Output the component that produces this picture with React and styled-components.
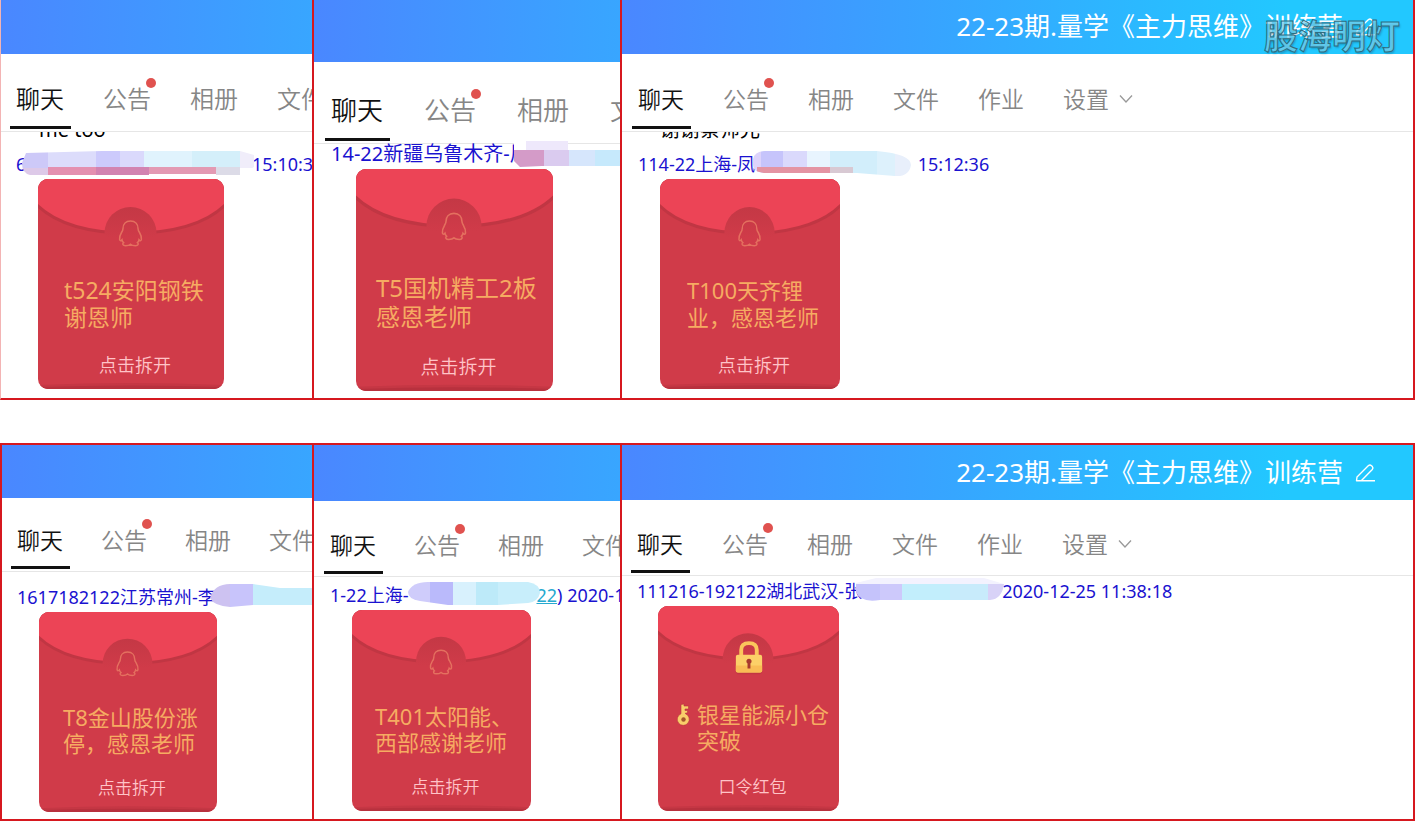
import React from 'react'
import styled, { createGlobalStyle } from 'styled-components'

const GlobalStyle = createGlobalStyle`
  * { box-sizing: border-box; }
  body {
    margin: 0;
    background: #fff;
    font-family: "Noto Sans", "Noto Sans CJK SC", sans-serif;
  }
`
const Board = styled.main`
  display: grid;
  grid-template-columns: 314fr 308fr 793fr;
  row-gap: 43px;
  padding-right: 1px;
`
const Panel = styled.section`
  min-width: 0;
  overflow: hidden;
  padding-bottom: 7px;
  border: 0 solid #d6181f;
  border-right-width: 2px;
  border-bottom-width: 2px;
  border-top-width: ${props => (props.$framed ? '2px' : '0')};
  border-left: ${props => props.$left || '0'};
`
const Header = styled.header`
  position: relative;
  display: flex;
  align-items: center;
  justify-content: flex-end;
  gap: 12px;
  height: ${props => props.$height}px;
  padding-right: 37px;
  color: #fff;
  background: ${props => props.$wide
    ? 'linear-gradient(92deg, #4a87ff 0%, #36a6ff 42%, #22c8ff 84%)'
    : 'linear-gradient(92deg, #4a87ff 0%, #38a6ff 100%)'};
`
const Title = styled.h1`
  margin: 0;
  padding-bottom: 2px;
  font-size: 26px;
  line-height: 36px;
  font-weight: 400;
  white-space: nowrap;
`
const IconButton = styled.button`
  display: flex;
  padding: 0;
  border: 0;
  color: inherit;
  background: none;
`
const Watermark = styled.span`
  position: absolute;
  top: 16px;
  right: 13px;
  z-index: 1;
  font-size: 34px;
  line-height: 40px;
  font-weight: 700;
  color: rgba(125, 212, 240, 0.7);
  -webkit-text-stroke: 1px #2f6c80;
  text-shadow: 1px 2px 2px rgba(0, 0, 0, 0.2);
`
const Tabs = styled.nav`
  display: flex;
  align-items: flex-end;
  gap: ${props => props.$gap}px;
  height: ${props => props.$height}px;
  padding: 0 0 2px ${props => props.$left}px;
  border-bottom: 1px solid #e6e6e6;
`
const Tab = styled.a`
  position: relative;
  flex: none;
  display: flex;
  align-items: center;
  gap: 10px;
  padding-bottom: ${props => props.$pad}px;
  font-size: ${props => props.$size}px;
  line-height: 34px;
  font-weight: 350;
  color: ${props => (props.$active ? '#111' : '#868686')};
  text-decoration: none;

  &::after {
    content: '';
    display: ${props => (props.$active ? 'block' : 'none')};
    position: absolute;
    left: -6px;
    right: -7px;
    bottom: 0;
    height: 3px;
    background: #111;
  }
`
const Dot = styled.i`
  position: absolute;
  top: -4px;
  right: -5px;
  width: 10px;
  height: 10px;
  border-radius: 50%;
  background: #e0524f;
`
const Chat = styled.div`
  padding-top: ${props => props.$top}px;
`
const Leftover = styled.div`
  display: flex;
  align-items: flex-end;
  height: 8px;
  margin-bottom: 15px;
  padding-left: 38px;
  overflow: hidden;
  font-size: 20px;
  line-height: 20px;
  color: #000;
`
const Sender = styled.div`
  display: flex;
  height: 18px;
  margin-bottom: 6px;
  padding-left: ${props => props.$left}px;
  font-size: ${props => props.$size}px;
  line-height: 18px;
  white-space: pre;
  color: #1a12d0;
`
const Mask = styled.span`
  position: relative;
  flex: none;
  width: ${props => props.$width}px;

  svg {
    position: absolute;
    top: -4px;
    left: ${props => -props.$overlap}px;
    overflow: visible;
  }
`
const Link = styled.a`
  color: #27a9cf;
`
const Card = styled.article`
  position: relative;
  display: flex;
  flex-direction: column;
  width: ${props => props.$width}px;
  height: ${props => props.$height}px;
  margin-left: ${props => props.$left}px;
  padding-bottom: 14px;
  border-radius: 10px;
  overflow: hidden;
  background: #d03b49;
`
const Backdrop = styled.svg`
  position: absolute;
  inset: 0;
  width: 100%;
  height: 100%;
`
const Wish = styled.p`
  position: relative;
  display: flex;
  margin: ${props => props.$top}px 0 0 ${props => props.$left}px;
  font-size: ${props => props.$size}px;
  line-height: ${props => props.$line}px;
  font-weight: 400;
  white-space: nowrap;
  color: #f6ab62;

  svg {
    margin: 2px 5px 0 0;
  }
`
const Open = styled.button`
  position: relative;
  margin: auto 0 0 8px;
  padding: 0;
  border: 0;
  background: none;
  font-family: inherit;
  font-size: ${props => props.$size}px;
  line-height: 20px;
  font-weight: 350;
  color: #ffc4c8;
`

const Pen = () => (
  <svg width="21" height="20" viewBox="0 0 21 20" fill="none" stroke="currentColor" strokeWidth="1.4" strokeLinejoin="round">
    <path d="M20 17.800H1.500L2 14L13.500 2.600Q15 1.400 16.500 2.700L17.300 3.500Q18.600 5 17.300 6.400L6.500 17.500" />
  </svg>
)

const Chevron = () => (
  <svg width="14" height="10" viewBox="0 0 14 10" fill="none" stroke="#999" strokeWidth="1.3">
    <path d="M1 1.5 L7 8 L13 1.5" />
  </svg>
)

const Key = () => (
  <svg width="15" height="23" viewBox="0 0 15 23">
    <path d="M4 1.500L7 1V3H11.500V6H8V7.500H10.500V10H8.500V10.800A6 6 0 1 1 4 10.800Z" fill="#f9ce6a" stroke="#b8343c" strokeWidth=".6" />
    <circle cx="6.5" cy="16.500" r="2.200" fill="#a5562b" />
  </svg>
)

const Penguin = () => (
  <path
    d="M92.500 42C87.500 42 85 45.500 85 49.500C85 51 84.500 52 83.500 53.500C82 56 81.300 58.500 81.600 60.500C81.800 62 83 62 84 60.800C84.200 62 84.800 62.800 85.600 63.600C84 64.800 84.800 66.700 87.500 66.700C89.800 66.700 91.500 66.200 92.500 65.200C93.500 66.200 95.200 66.700 97.500 66.700C100.200 66.700 101 64.800 99.400 63.600C100.200 62.800 100.800 62 101 60.800C102 62 103.200 62 103.400 60.500C103.700 58.500 103 56 101.500 53.500C100.500 52 100 51 100 49.500C100 45.500 97.500 42 92.500 42Z"
    fill="none"
    stroke="#e4705f"
    strokeWidth="1.5"
  />
)

const Lock = () => (
  <g>
    <path d="M80 52H107V66Q107 70 103 70H84Q80 70 80 66Z" fill="#b02f3b" opacity=".4" />
    <path d="M85.500 51V45Q85.500 38 93.500 38Q101.500 38 101.500 45V51" fill="none" stroke="#fbc65c" strokeWidth="4" />
    <rect x="80" y="50" width="27" height="18" rx="2" fill="#fcd068" />
    <path d="M80 61H107V66Q107 68 105 68H82Q80 68 80 66Z" fill="#f9bd55" />
    <path d="M93.500 54a2.600 2.600 0 0 1 1.500 4.800V64h-3v-5.200a2.600 2.600 0 0 1 1.500-4.800Z" fill="#a83a2e" />
  </g>
)

const Envelope = ({ id, locked }) => (
  <Backdrop viewBox="0 0 186 210" preserveAspectRatio="none">
    <defs>
      <linearGradient id={id} x1="0" y1="0" x2="0" y2="1">
        <stop offset="0" stopColor="#c43845" />
        <stop offset=".6" stopColor="#d03b49" />
      </linearGradient>
    </defs>
    <path d="M0 29Q28 55 92 56Q158 55 186 29V0H0Z" fill="#c03643" />
    <path d="M0 0H186V25Q158 52 93 53Q28 52 0 25Z" fill="#ec4456" />
    <circle cx="92.500" cy="54" r="26" fill={`url(#${id})`} />
    <path d="M0 206Q93 202 186 206V210H0Z" fill="#c53744" />
    <path d="M0 208Q93 205 186 208V210H0Z" fill="#b8313e" />
    {locked ? <Lock /> : <Penguin />}
  </Backdrop>
)

// mosaic patches: [x, y, width, height, colour]
const Mosaic = ({ id, width, height, shape, blocks }) => (
  <svg width={width} height={height}>
    <clipPath id={id}><path d={shape} /></clipPath>
    <g clipPath={`url(#${id})`}>
      {blocks.map(([x, y, w, h, fill], i) => <rect key={i} x={x} y={y} width={w} height={h} fill={fill} />)}
    </g>
  </svg>
)

const panels = [
  {
    left: '1px solid #f3b4b4', header: 54, tabsHeight: 78, pad: 13, tab: 24, gap: 39, inset: 15,
    leftover: 'me too', top: 0, senderSize: 18, before: '6', maskWidth: 221, overlap: 4, after: ' 15:10:38',
    mask: {
      width: 232, height: 26, shape: 'M4 2L80 0H218L232 4V16L218 24H8Q0 22 0 12Z',
      blocks: [[0, 0, 26, 17, '#cdc9f8'], [26, 0, 48, 17, '#dcdcfb'], [74, 0, 24, 17, '#cccafc'], [98, 0, 24, 17, '#dad9fc'], [122, 0, 48, 17, '#e0f3fd'], [170, 0, 48, 17, '#d4effa'], [218, 0, 14, 17, '#f0edfa'], [0, 17, 26, 8, '#ddc9e8'], [26, 16, 48, 9, '#e490b0'], [74, 16, 53, 9, '#d283b1'], [127, 16, 67, 7, '#e39ab3'], [194, 16, 24, 9, '#dcdbe7']],
    },
    card: { left: 37, width: 186, height: 210, top: 98, inset: 26, size: 23, line: 27, action: 18 },
    wish: ['t524安阳钢铁', '谢恩师'],
  },
  {
    header: 62, tabsHeight: 82, pad: 14, tab: 26, gap: 41, inset: 17,
    top: 1, senderSize: 20, before: '14-22新疆乌鲁木齐-凤', maskWidth: 110, overlap: 18, after: '',
    mask: {
      width: 120, height: 27, shape: 'M2 0H56V9H120V25H30L8 26L2 20Z',
      blocks: [[0, 0, 14, 9, '#fff'], [14, 0, 42, 9, '#eee8fb'], [0, 9, 32, 18, '#d49bc8'], [32, 9, 25, 18, '#dacbef'], [57, 9, 26, 18, '#d6e6fc'], [83, 9, 40, 18, '#c6e9fc']],
    },
    card: { left: 42, width: 197, height: 222, top: 104, inset: 20, size: 24, line: 29, action: 19 },
    wish: ['T5国机精工2板', '感恩老师'],
  },
  {
    wide: true, watermark: true, header: 54, tabsHeight: 78, pad: 13, tab: 23, gap: 39, inset: 16,
    leftover: '谢谢蔡师兄', top: 0, senderSize: 18, before: '114-22上海-凤', maskWidth: 158, overlap: 2, after: ' 15:12:36',
    mask: {
      width: 158, height: 28, shape: 'M0 8Q2 0 12 0H124Q158 3 158 14Q156 26 142 25L104 22H14Q0 22 0 14Z',
      blocks: [[0, 0, 8, 28, '#ddd3fb'], [8, 0, 22, 28, '#c6c4fb'], [30, 0, 24, 28, '#dad9fc'], [54, 0, 23, 28, '#e8f4fe'], [77, 0, 47, 28, '#d2eefb'], [124, 0, 18, 28, '#ddf1fc'], [142, 0, 16, 28, '#e8effb'], [4, 16, 73, 6, '#e494a3'], [77, 16, 23, 6, '#d8c9d3']],
    },
    card: { left: 38, width: 180, height: 210, top: 98, inset: 27, size: 22, line: 27, action: 18 },
    wish: ['T100天齐锂', '业，感恩老师'],
  },
  {
    framed: true, left: '2px solid #d6181f', header: 53, tabsHeight: 74, pad: 12, tab: 23, gap: 38, inset: 15,
    top: 16, senderSize: 18, before: '1617182122江苏常州-李', maskWidth: 110, overlap: 6, after: '',
    mask: {
      width: 104, height: 24, shape: 'M0 14Q4 0 20 0H43L70 4H104V21H43L20 23Q4 22 0 14Z',
      blocks: [[0, 0, 20, 24, '#cdc2f1'], [20, 0, 23, 24, '#c8c4fb'], [43, 0, 64, 24, '#c5edfb']],
    },
    card: { left: 37, width: 178, height: 200, top: 92, inset: 24, size: 22, line: 26, action: 17 },
    wish: ['T8金山股份涨', '停，感恩老师'],
  },
  {
    framed: true, header: 56, tabsHeight: 76, pad: 12, tab: 23, gap: 38, inset: 16,
    top: 9, senderSize: 18, before: '1-22上海-', maskWidth: 128, overlap: 0, link: '22', after: ') 2020-12-24',
    mask: {
      width: 132, height: 23, shape: 'M0 10Q4 0 20 0H120Q132 2 132 11Q130 20 120 21L90 23H40L12 19Q0 17 0 10Z',
      blocks: [[0, 0, 22, 24, '#cfccfb'], [22, 0, 23, 24, '#babafb'], [45, 0, 23, 24, '#d8f1fd'], [68, 0, 22, 24, '#bdeaf9'], [90, 0, 44, 24, '#c8eefb']],
    },
    card: { left: 38, width: 179, height: 201, top: 93, inset: 23, size: 22, line: 26, action: 17 },
    wish: ['T401太阳能、', '西部感谢老师'],
  },
  {
    framed: true, wide: true, locked: true, header: 55, tabsHeight: 76, pad: 12, tab: 23, gap: 39, inset: 15,
    top: 6, senderSize: 18, before: '111216-192122湖北武汉-张', maskWidth: 140, overlap: 6, after: '2020-12-25 11:38:18',
    mask: {
      width: 148, height: 24, shape: 'M0 5L20 0H128L148 6Q146 21 134 22H24Q4 25 0 14Z',
      blocks: [[0, 0, 148, 6, '#f3f2fe'], [0, 6, 24, 20, '#c5c3fb'], [24, 6, 22, 20, '#cdc9fb'], [46, 6, 48, 20, '#c2eefc'], [94, 6, 38, 20, '#c8ebfb'], [132, 6, 16, 20, '#d8d2f7']],
    },
    card: { left: 36, width: 181, height: 205, top: 95, inset: 19, size: 22, line: 26, action: 17 },
    wish: ['银星能源小仓', '突破'],
  },
]

const names = ['聊天', '公告', '相册', '文件', '作业', '设置']

const ChatPanel = ({ p, index }) => (
  <Panel $framed={p.framed} $left={p.left}>
    <Header $height={p.header} $wide={p.wide}>
      {p.wide && <Title>22-23期.量学《主力思维》训练营</Title>}
      {p.wide && <IconButton aria-label="编辑"><Pen /></IconButton>}
      {p.watermark && <Watermark>股海明灯</Watermark>}
    </Header>
    <Tabs $height={p.tabsHeight} $gap={p.gap} $left={p.inset}>
      {names.slice(0, p.wide ? 6 : 4).map((name, i) => (
        <Tab key={name} href="#" $active={i === 0} $size={p.tab} $pad={p.pad}>
          {name}
          {i === 1 && <Dot />}
          {i === 5 && <Chevron />}
        </Tab>
      ))}
    </Tabs>
    <Chat $top={p.top}>
      {p.leftover && <Leftover>{p.leftover}</Leftover>}
      <Sender $left={p.inset} $size={p.senderSize}>
        <span>{p.before}</span>
        <Mask $width={p.maskWidth} $overlap={p.overlap}><Mosaic id={`mosaic${index}`} {...p.mask} /></Mask>
        {p.link && <Link href="#">{p.link}</Link>}
        <span>{p.after}</span>
      </Sender>
      <Card $left={p.card.left} $width={p.card.width} $height={p.card.height}>
        <Envelope id={`seal${index}`} locked={p.locked} />
        <Wish $top={p.card.top} $left={p.card.inset} $size={p.card.size} $line={p.card.line}>
          {p.locked && <Key />}
          <span>{p.wish[0]}<br />{p.wish[1]}</span>
        </Wish>
        <Open $size={p.card.action}>{p.locked ? '口令红包' : '点击拆开'}</Open>
      </Card>
    </Chat>
  </Panel>
)

const App = () => {
  return (
    <>
      <GlobalStyle />
      <Board>
        {panels.map((p, i) => <ChatPanel key={i} p={p} index={i} />)}
      </Board>
    </>
  )
}
export default App
